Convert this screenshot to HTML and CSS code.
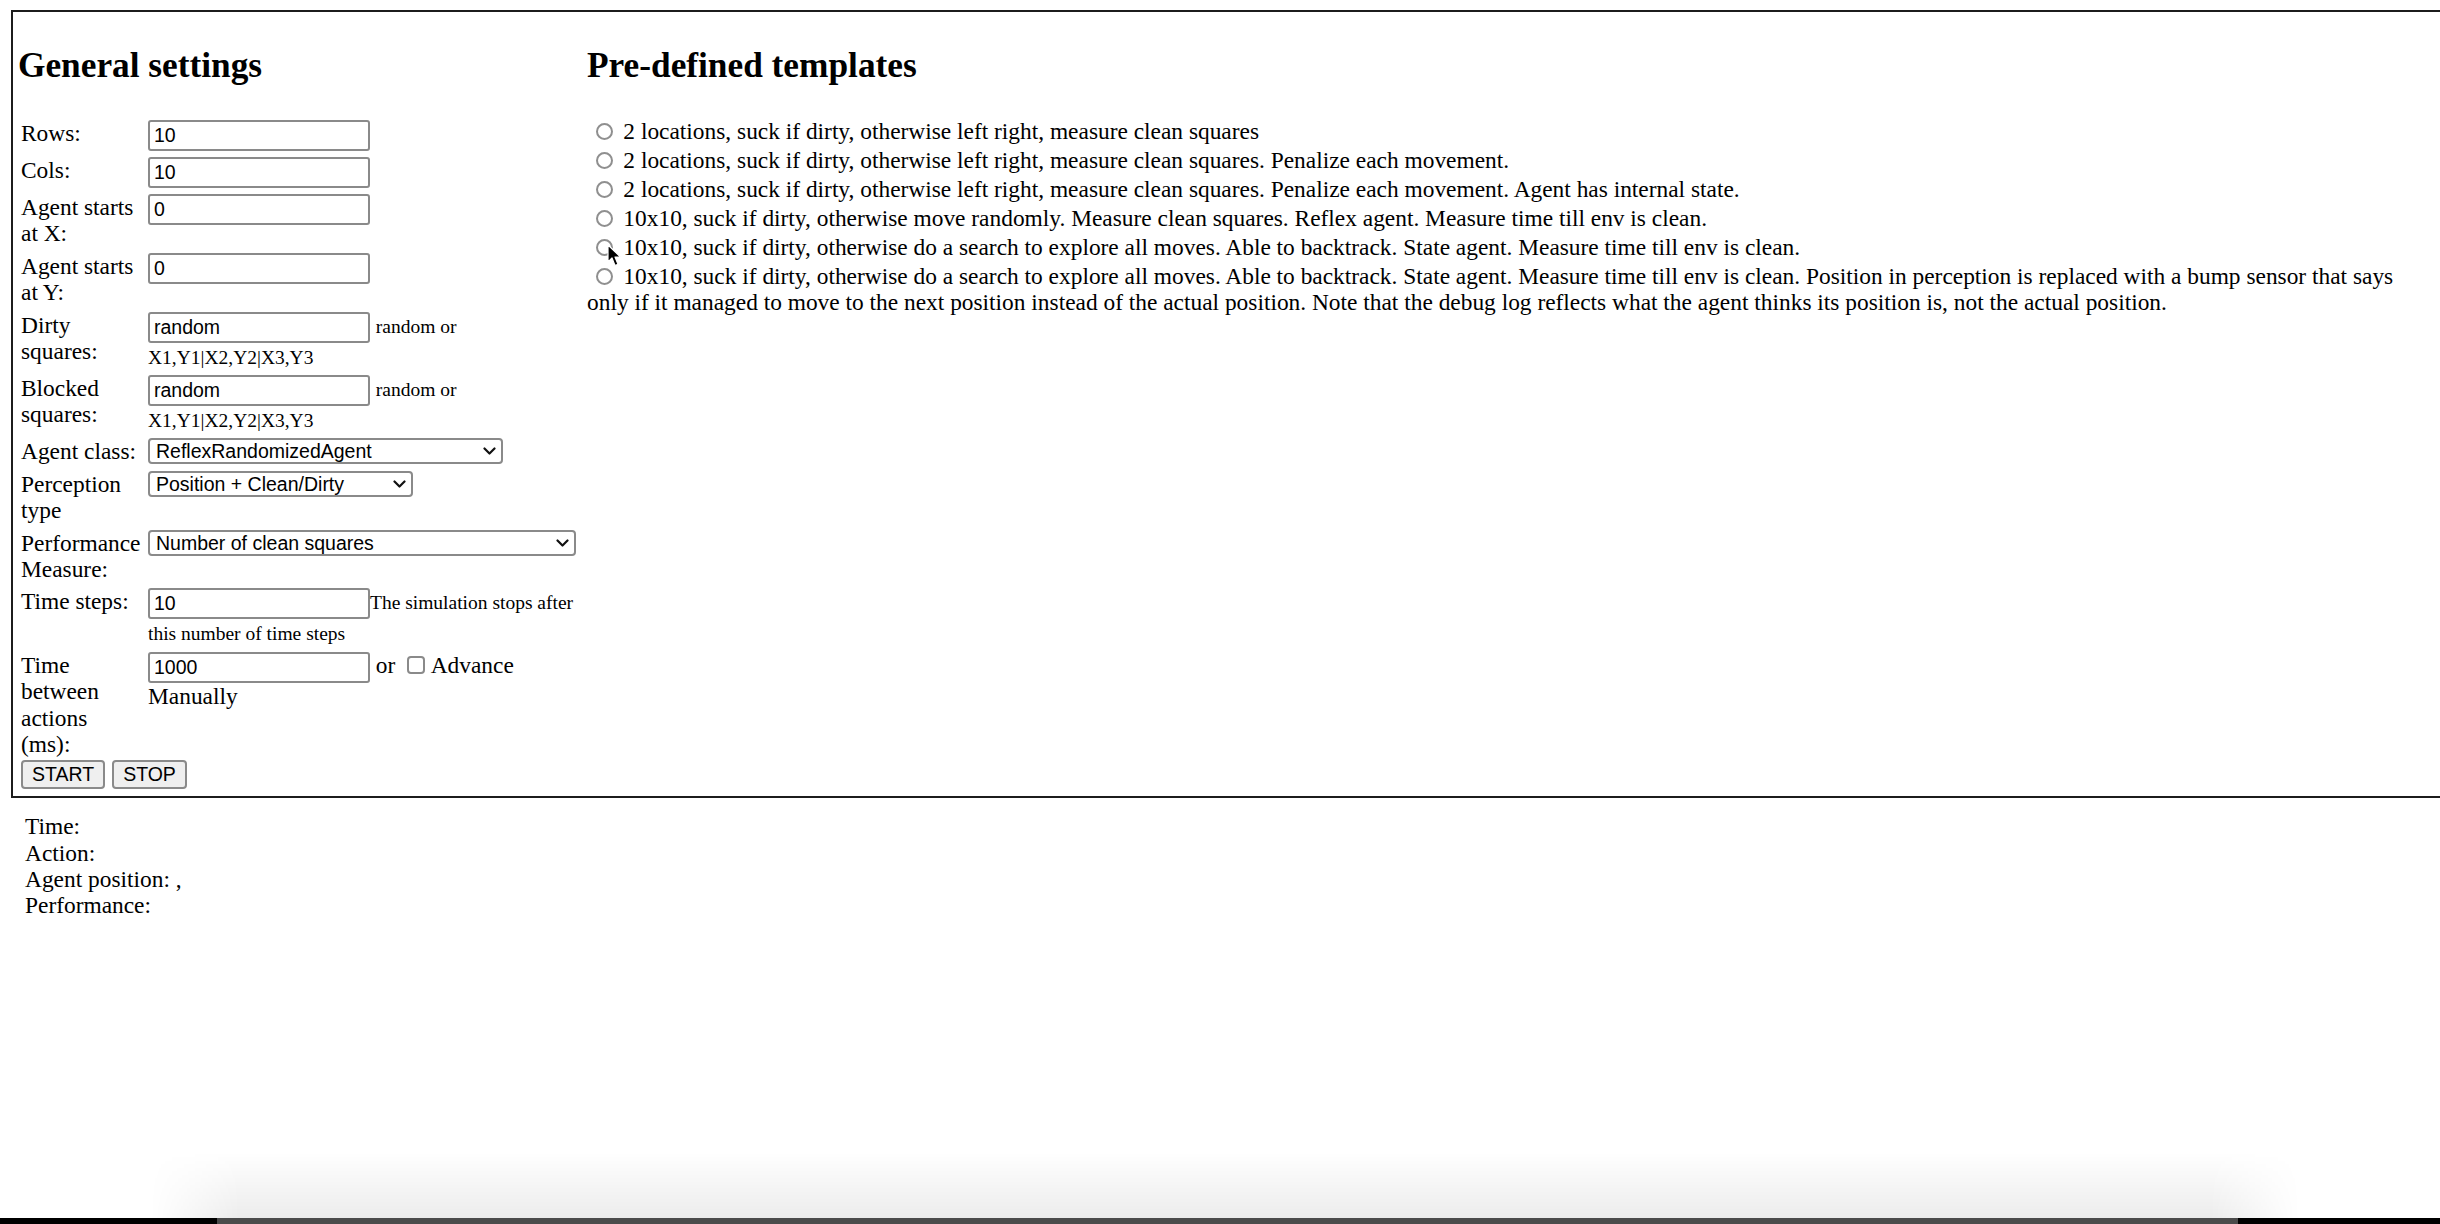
FILE: index.html
```html
<!DOCTYPE html>
<html>
<head>
<meta charset="utf-8">
<title>Vacuum world</title>
<link rel="stylesheet" href="styles.css">
</head>
<body>
<div class="panel">
  <div class="col-left">
    <h2>General settings</h2>
    <div class="form">
      <div class="lbl">Rows:</div>
      <div class="fld"><input class="txt" type="text" value="10"></div>

      <div class="lbl">Cols:</div>
      <div class="fld"><input class="txt" type="text" value="10"></div>

      <div class="lbl">Agent starts at X:</div>
      <div class="fld"><input class="txt" type="text" value="0"></div>

      <div class="lbl">Agent starts at Y:</div>
      <div class="fld"><input class="txt" type="text" value="0"></div>

      <div class="lbl">Dirty squares:</div>
      <div class="fld"><input class="txt" type="text" value="random"> <small>random or <span class="nw">X1,Y1|X2,Y2|X3,Y3</span></small></div>

      <div class="lbl">Blocked squares:</div>
      <div class="fld"><input class="txt" type="text" value="random"> <small>random or <span class="nw">X1,Y1|X2,Y2|X3,Y3</span></small></div>

      <div class="lbl">Agent class:</div>
      <div class="fld"><span class="sel sel-agent"><select><option>ReflexRandomizedAgent</option></select><svg class="chev" viewBox="0 0 13 8" width="13" height="8"><path d="M1.5 1.5 L6.5 6.5 L11.5 1.5" fill="none" stroke="#111" stroke-width="2.2" stroke-linecap="round" stroke-linejoin="round"/></svg></span></div>

      <div class="lbl">Perception type</div>
      <div class="fld"><span class="sel sel-perc"><select><option>Position + Clean/Dirty</option></select><svg class="chev" viewBox="0 0 13 8" width="13" height="8"><path d="M1.5 1.5 L6.5 6.5 L11.5 1.5" fill="none" stroke="#111" stroke-width="2.2" stroke-linecap="round" stroke-linejoin="round"/></svg></span></div>

      <div class="lbl">Performance Measure:</div>
      <div class="fld"><span class="sel sel-perf"><select><option>Number of clean squares</option></select><svg class="chev" viewBox="0 0 13 8" width="13" height="8"><path d="M1.5 1.5 L6.5 6.5 L11.5 1.5" fill="none" stroke="#111" stroke-width="2.2" stroke-linecap="round" stroke-linejoin="round"/></svg></span></div>

      <div class="lbl">Time steps:</div>
      <div class="fld"><input class="txt" type="text" value="10"><small><span class="nw">The simulation stops after</span> this number of time steps</small></div>

      <div class="lbl">Time between actions (ms):</div>
      <div class="fld"><input class="txt" type="text" value="1000"> or <input class="chk" type="checkbox">Advance Manually</div>
    </div>
    <div class="buttons">
      <button type="button">START</button>
      <button type="button">STOP</button>
    </div>
  </div>
  <div class="col-right">
    <h2>Pre-defined templates</h2>
    <div class="templates">
      <div class="tpl"><input class="rad" type="radio" name="tpl"> 2 locations, suck if dirty, otherwise left right, measure clean squares</div>
      <div class="tpl"><input class="rad" type="radio" name="tpl"> 2 locations, suck if dirty, otherwise left right, measure clean squares. Penalize each movement.</div>
      <div class="tpl"><input class="rad" type="radio" name="tpl"> 2 locations, suck if dirty, otherwise left right, measure clean squares. Penalize each movement. Agent has internal state.</div>
      <div class="tpl"><input class="rad" type="radio" name="tpl"> 10x10, suck if dirty, otherwise move randomly. Measure clean squares. Reflex agent. Measure time till env is clean.</div>
      <div class="tpl"><input class="rad" type="radio" name="tpl"> 10x10, suck if dirty, otherwise do a search to explore all moves. Able to backtrack. State agent. Measure time till env is clean.</div>
      <div class="tpl"><input class="rad" type="radio" name="tpl"> 10x10, suck if dirty, otherwise do a search to explore all moves. Able to backtrack. State agent. Measure time till env is clean. Position in perception is replaced with a bump sensor that says only if it managed to move to the next position instead of the actual position. Note that the debug log reflects what the agent thinks its position is, not the actual position.</div>
    </div>
  </div>
</div>
<div class="status">
  Time: <br>
  Action: <br>
  Agent position: , <br>
  Performance:
</div>

<svg class="cursor" viewBox="0 0 14 23" width="14" height="23"><path d="M1 1 L1 18 L5 14 L8 21.5 L11 20.2 L8 13 L13.5 13 Z" fill="#000" stroke="#fff" stroke-width="1.2" stroke-linejoin="round"/></svg>
<div class="dock-shadow"></div>
<div class="desk-edge"><div class="desk-strip"></div></div>
</body>
</html>
```

FILE: styles.css
```css
html, body {
  margin: 0;
  padding: 0;
  background: #fff;
  overflow: hidden;
}

body {
  font-family: "Liberation Serif", "Times New Roman", serif;
  font-size: 23.4px;
  line-height: 26.4px;
  color: #000;
  height: 1224px;
  position: relative;
}

.panel {
  display: flex;
  margin: 10px -60px 0 11px;
  border: 2px solid #1c1c1c;
  padding: 3.5px 0 7px 5px;
}

h2 {
  font-size: 35.3px;
  line-height: 40px;
  font-weight: bold;
  margin: 30px 0;
}

.col-left {
  flex: 0 0 569px;
}

.col-right {
  flex: 0 0 1830px;
}

.form {
  display: grid;
  grid-template-columns: 120px 428px;
  column-gap: 7px;
  row-gap: 6px;
  align-items: start;
  margin: 0 0 0 3px;
  padding-top: 4.5px;
}

.fld small {
  font-size: 19.5px;
  line-height: 22px;
}

.nw {
  white-space: nowrap;
}

.txt {
  box-sizing: border-box;
  width: 222px;
  height: 31px;
  margin: 0;
  padding: 0 4px;
  border: 2px solid #8a8a8a;
  border-radius: 3px;
  background: #fff;
  font-family: "Liberation Sans", Arial, sans-serif;
  font-size: 19.5px;
  color: #000;
  vertical-align: top;
}

.sel {
  position: relative;
  display: inline-block;
  vertical-align: top;
}

.sel select {
  -webkit-appearance: none;
  appearance: none;
  box-sizing: border-box;
  height: 26px;
  margin: 0;
  padding: 0 0 0 6px;
  border: 2px solid #8a8a8a;
  border-radius: 4px;
  background: #fff;
  font-family: "Liberation Sans", Arial, sans-serif;
  font-size: 19.5px;
  color: #000;
  display: block;
}

.sel-agent select { width: 355px; }
.sel-perc select { width: 265px; }
.sel-perf select { width: 428px; }

.chev {
  position: absolute;
  right: 7px;
  top: 9px;
  pointer-events: none;
}

.chk {
  -webkit-appearance: none;
  appearance: none;
  box-sizing: border-box;
  width: 18px;
  height: 18px;
  margin: 0 6px 0 5.5px;
  border: 2px solid #8a8a8a;
  border-radius: 4px;
  background: #fff;
  vertical-align: -1px;
}

.buttons {
  display: flex;
  gap: 7px;
  margin: 2px 0 0 3px;
}

.buttons button {
  box-sizing: border-box;
  height: 29px;
  margin: 0;
  padding: 0 9px;
  border: 2px solid #8a8a8a;
  border-radius: 4px;
  background: #efefef;
  font-family: "Liberation Sans", Arial, sans-serif;
  font-size: 19.5px;
  color: #000;
}

.templates {
  padding-top: 2px;
}

.tpl {
  margin-bottom: 2.6px;
}

.rad {
  -webkit-appearance: none;
  appearance: none;
  box-sizing: border-box;
  width: 17px;
  height: 17px;
  margin: 0 5px 0 8.5px;
  border: 2px solid #8f8f8f;
  border-radius: 50%;
  background: #fff;
  vertical-align: -1px;
}

.status {
  margin: 15.7px 0 0 25px;
}

.cursor {
  position: absolute;
  left: 607px;
  top: 244px;
}

.dock-shadow {
  position: fixed;
  left: 150px;
  right: 140px;
  bottom: 6px;
  height: 66px;
  background: linear-gradient(to bottom, rgba(0, 0, 0, 0), rgba(0, 0, 0, 0.075));
  -webkit-mask-image: linear-gradient(to right, transparent, #000 90px, #000 calc(100% - 90px), transparent);
  mask-image: linear-gradient(to right, transparent, #000 90px, #000 calc(100% - 90px), transparent);
}

.desk-edge {
  position: fixed;
  left: 0;
  right: 0;
  bottom: 0;
  height: 6px;
  background: #000;
}

.desk-strip {
  margin: 0 202px 0 217px;
  height: 6px;
  background: #4b4b4b;
}
```
